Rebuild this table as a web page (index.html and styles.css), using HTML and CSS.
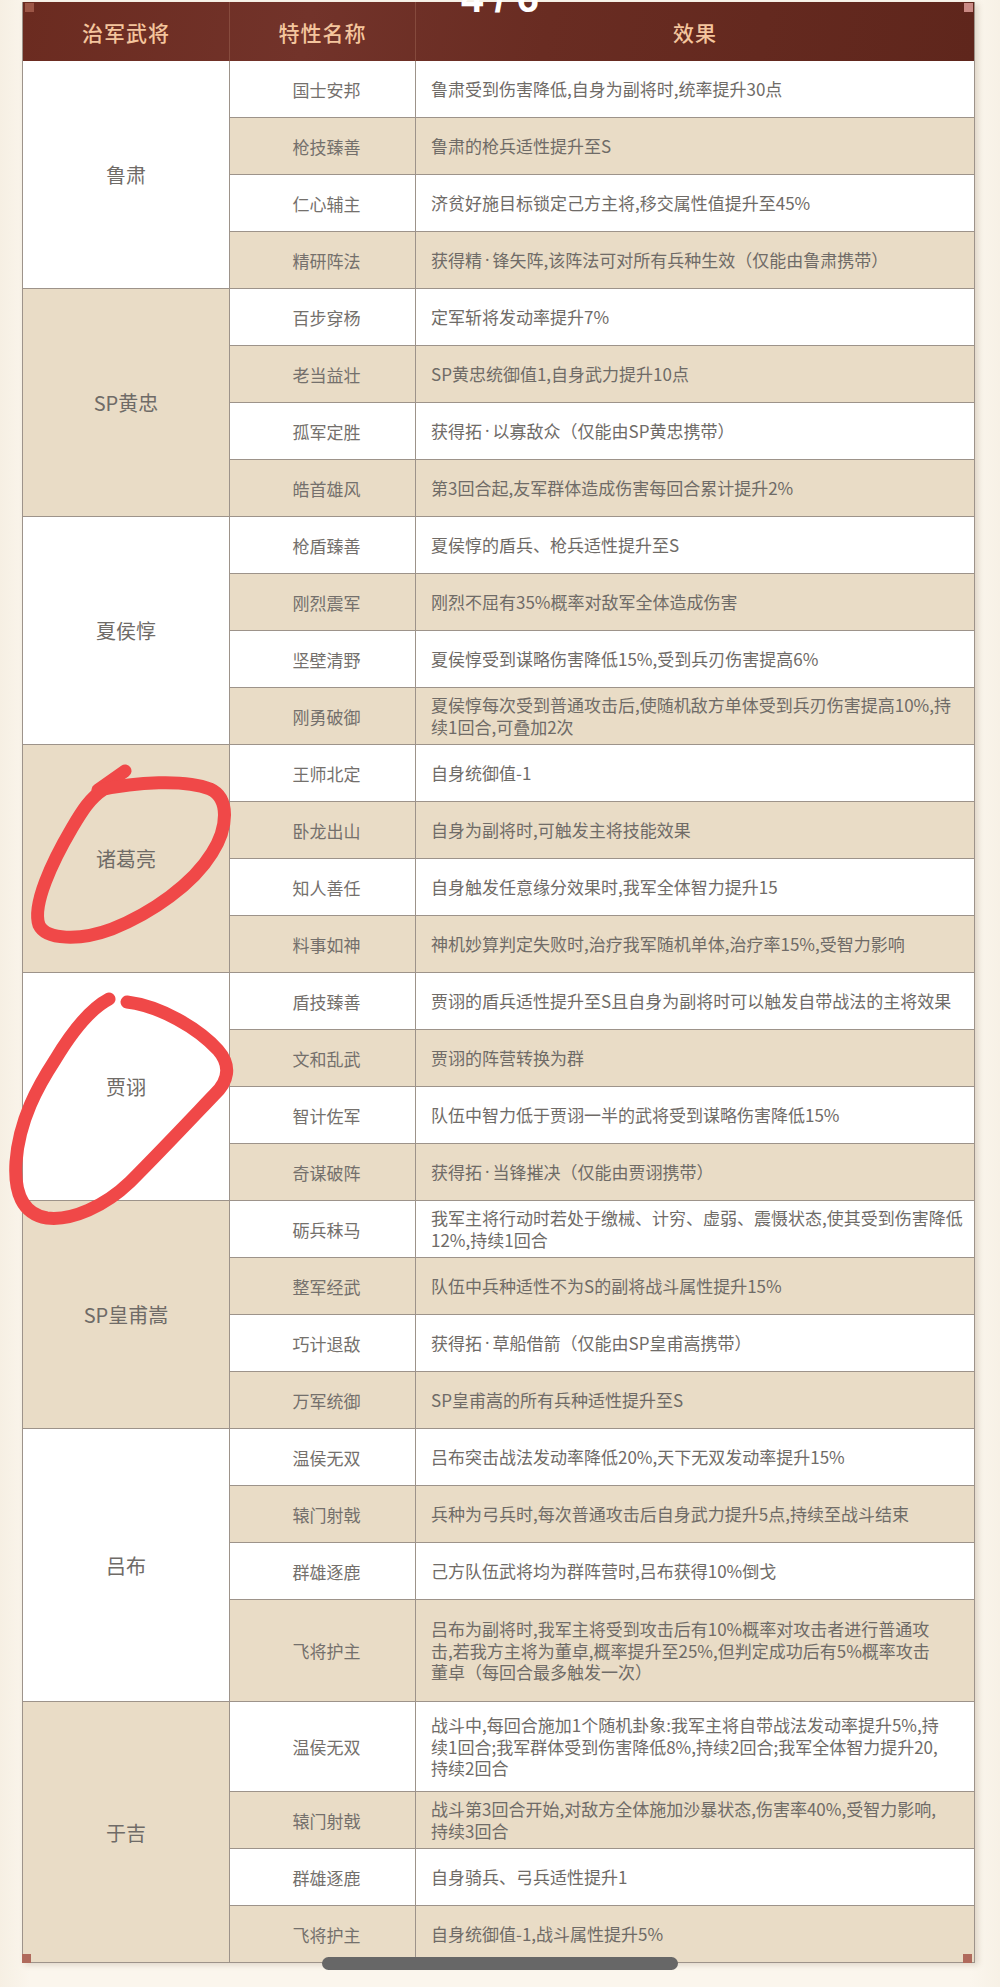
FILE: index.html
```html
<!DOCTYPE html>
<html lang="zh-CN">
<head>
<meta charset="utf-8">
<title>治军武将特性</title>
<link rel="stylesheet" href="styles.css">
</head>
<body>
<div class="page">
  <div class="table">
    <span class="corner tl"></span><span class="corner tr"></span>
    <span class="corner bl"></span><span class="corner br"></span>
    <div class="thead">
      <div class="th c1">治军武将</div>
      <div class="th c2">特性名称</div>
      <div class="th c3">效果</div>
    </div>

    <div class="group">
      <div class="gname">鲁肃</div>
      <div class="traits">
        <div class="row"><div class="tname">国士安邦</div><div class="teff">鲁肃受到伤害降低,自身为副将时,统率提升30点</div></div>
        <div class="row"><div class="tname">枪技臻善</div><div class="teff">鲁肃的枪兵适性提升至S</div></div>
        <div class="row"><div class="tname">仁心辅主</div><div class="teff">济贫好施目标锁定己方主将,移交属性值提升至45%</div></div>
        <div class="row"><div class="tname">精研阵法</div><div class="teff">获得精<span class="dot">·</span>锋矢阵,该阵法可对所有兵种生效（仅能由鲁肃携带）</div></div>
      </div>
    </div>

    <div class="group alt">
      <div class="gname">SP黄忠</div>
      <div class="traits">
        <div class="row"><div class="tname">百步穿杨</div><div class="teff">定军斩将发动率提升7%</div></div>
        <div class="row"><div class="tname">老当益壮</div><div class="teff">SP黄忠统御值1,自身武力提升10点</div></div>
        <div class="row"><div class="tname">孤军定胜</div><div class="teff">获得拓<span class="dot">·</span>以寡敌众（仅能由SP黄忠携带）</div></div>
        <div class="row"><div class="tname">皓首雄风</div><div class="teff">第3回合起,友军群体造成伤害每回合累计提升2%</div></div>
      </div>
    </div>

    <div class="group">
      <div class="gname">夏侯惇</div>
      <div class="traits">
        <div class="row"><div class="tname">枪盾臻善</div><div class="teff">夏侯惇的盾兵、枪兵适性提升至S</div></div>
        <div class="row"><div class="tname">刚烈震军</div><div class="teff">刚烈不屈有35%概率对敌军全体造成伤害</div></div>
        <div class="row"><div class="tname">坚壁清野</div><div class="teff">夏侯惇受到谋略伤害降低15%,受到兵刃伤害提高6%</div></div>
        <div class="row"><div class="tname">刚勇破御</div><div class="teff">夏侯惇每次受到普通攻击后,使随机敌方单体受到兵刃伤害提高10%,持<br>续1回合,可叠加2次</div></div>
      </div>
    </div>

    <div class="group alt">
      <div class="gname">诸葛亮</div>
      <div class="traits">
        <div class="row"><div class="tname">王师北定</div><div class="teff">自身统御值-1</div></div>
        <div class="row"><div class="tname">卧龙出山</div><div class="teff">自身为副将时,可触发主将技能效果</div></div>
        <div class="row"><div class="tname">知人善任</div><div class="teff">自身触发任意缘分效果时,我军全体智力提升15</div></div>
        <div class="row"><div class="tname">料事如神</div><div class="teff">神机妙算判定失败时,治疗我军随机单体,治疗率15%,受智力影响</div></div>
      </div>
    </div>

    <div class="group">
      <div class="gname">贾诩</div>
      <div class="traits">
        <div class="row"><div class="tname">盾技臻善</div><div class="teff">贾诩的盾兵适性提升至S且自身为副将时可以触发自带战法的主将效果</div></div>
        <div class="row"><div class="tname">文和乱武</div><div class="teff">贾诩的阵营转换为群</div></div>
        <div class="row"><div class="tname">智计佐军</div><div class="teff">队伍中智力低于贾诩一半的武将受到谋略伤害降低15%</div></div>
        <div class="row"><div class="tname">奇谋破阵</div><div class="teff">获得拓<span class="dot">·</span>当锋摧决（仅能由贾诩携带）</div></div>
      </div>
    </div>

    <div class="group alt">
      <div class="gname">SP皇甫嵩</div>
      <div class="traits">
        <div class="row"><div class="tname">砺兵秣马</div><div class="teff">我军主将行动时若处于缴械、计穷、虚弱、震慑状态,使其受到伤害降低<br>12%,持续1回合</div></div>
        <div class="row"><div class="tname">整军经武</div><div class="teff">队伍中兵种适性不为S的副将战斗属性提升15%</div></div>
        <div class="row"><div class="tname">巧计退敌</div><div class="teff">获得拓<span class="dot">·</span>草船借箭（仅能由SP皇甫嵩携带）</div></div>
        <div class="row"><div class="tname">万军统御</div><div class="teff">SP皇甫嵩的所有兵种适性提升至S</div></div>
      </div>
    </div>

    <div class="group">
      <div class="gname">吕布</div>
      <div class="traits">
        <div class="row"><div class="tname">温侯无双</div><div class="teff">吕布突击战法发动率降低20%,天下无双发动率提升15%</div></div>
        <div class="row"><div class="tname">辕门射戟</div><div class="teff">兵种为弓兵时,每次普通攻击后自身武力提升5点,持续至战斗结束</div></div>
        <div class="row"><div class="tname">群雄逐鹿</div><div class="teff">己方队伍武将均为群阵营时,吕布获得10%倒戈</div></div>
        <div class="row row-xl"><div class="tname">飞将护主</div><div class="teff">吕布为副将时,我军主将受到攻击后有10%概率对攻击者进行普通攻<br>击,若我方主将为董卓,概率提升至25%,但判定成功后有5%概率攻击<br>董卓（每回合最多触发一次）</div></div>
      </div>
    </div>

    <div class="group alt last">
      <div class="gname">于吉</div>
      <div class="traits">
        <div class="row row-l"><div class="tname">温侯无双</div><div class="teff">战斗中,每回合施加1个随机卦象:我军主将自带战法发动率提升5%,持<br>续1回合;我军群体受到伤害降低8%,持续2回合;我军全体智力提升20,<br>持续2回合</div></div>
        <div class="row"><div class="tname">辕门射戟</div><div class="teff">战斗第3回合开始,对敌方全体施加沙暴状态,伤害率40%,受智力影响,<br>持续3回合</div></div>
        <div class="row"><div class="tname">群雄逐鹿</div><div class="teff">自身骑兵、弓兵适性提升1</div></div>
        <div class="row"><div class="tname">飞将护主</div><div class="teff">自身统御值-1,战斗属性提升5%</div></div>
      </div>
    </div>
  </div>
</div>

<div class="pager">4 / 6</div>

<svg class="marks" width="1000" height="1987" viewBox="0 0 1000 1987" aria-hidden="true">
  <path d="M125,771 L98,790"/>
  <path d="M100,790 C135,782 185,779 210,789 C230,798 228,828 212,853 C193,884 152,913 112,929 C80,941 46,940 39,925 C32,905 52,862 72,828 C82,811 90,798 104,789"/>
  <path d="M127,1002 C160,1006 198,1028 218,1050 C232,1066 228,1082 214,1095 C192,1118 160,1152 130,1182 C105,1206 72,1221 47,1218 C22,1214 14,1192 16,1162 C19,1120 38,1086 55,1060 C70,1035 88,1010 109,999"/>
</svg>

<div class="scrollbar"></div>
</body>
</html>
```

FILE: styles.css
```css
html, body {
  margin: 0;
  padding: 0;
}

body {
  width: 1000px;
  height: 1987px;
  position: relative;
  overflow: hidden;
  background: linear-gradient(90deg, #f6efe3 0, #fbf6ed 30px, #fbf6ed 970px, #f7f1e6 1000px);
  font-family: "Noto Sans CJK SC", "Noto Sans", sans-serif;
}

.page {
  padding: 2px 0 0 22px;
}

.table {
  position: relative;
  width: 951px;
  background: #fff;
  border-left: 1px solid #9d938a;
  border-right: 1px solid #9d938a;
  box-shadow: 3px 2px 6px rgba(110, 80, 50, 0.2);
}

.corner {
  position: absolute;
  width: 9px;
  height: 9px;
  background: #b06a5c;
  z-index: 2;
}
.corner.tl { left: 2px; top: 1px; background: #9c5646; }
.corner.tr { right: 1px; top: 1px; background: #c98a84; }
.corner.bl { left: -1px; bottom: 0; }
.corner.br { right: 2px; bottom: 0; }

.thead {
  display: flex;
  height: 59px;
  background: linear-gradient(100deg, #6b2b20 0%, #72332a 30%, #692c22 55%, #5f261c 100%);
}

.th {
  display: flex;
  align-items: center;
  justify-content: center;
  color: #f4c59d;
  font-size: 21px;
  font-weight: 500;
  letter-spacing: 1px;
}

.th.c1 {
  width: 206px;
  border-right: 1px solid rgba(255, 210, 180, 0.16);
}

.th.c2 {
  width: 185px;
  border-right: 1px solid rgba(255, 210, 180, 0.16);
}

.th.c3 {
  flex: 1;
}

.group {
  display: flex;
  border-bottom: 1px solid #9d938a;
}

.gname {
  width: 206px;
  flex: none;
  border-right: 1px solid #9d938a;
  display: flex;
  align-items: center;
  justify-content: center;
  font-size: 20px;
  color: #6f6b67;
  background: #fff;
}

.group.alt .gname {
  background: #e9dcc6;
}

.traits {
  flex: 1;
  display: flex;
  flex-direction: column;
}

.row {
  display: flex;
  height: 56px;
  background: #fff;
}

.row + .row {
  border-top: 1px solid #9d938a;
}

.row:nth-child(even) {
  background: #e9dcc6;
}

.row.row-xl {
  height: 101px;
}

.row.row-l {
  height: 89px;
}

.tname {
  width: 177px;
  flex: none;
  padding-left: 8px;
  border-right: 1px solid #9d938a;
  display: flex;
  align-items: center;
  justify-content: center;
  font-size: 17px;
  color: #74706c;
}

.teff {
  flex: 1;
  display: flex;
  align-items: center;
  padding: 0 10px 0 15px;
  font-size: 17px;
  line-height: 21.6px;
  color: #6f6b67;
  white-space: nowrap;
}

.teff .dot {
  font-family: "Noto Sans", "DejaVu Sans", sans-serif;
  padding: 0 3px;
}

.pager {
  position: absolute;
  top: -22px;
  left: 0;
  width: 1000px;
  text-align: center;
  font-family: "Liberation Sans", Arial, sans-serif;
  font-weight: 700;
  font-size: 40px;
  line-height: 40px;
  color: #fff;
  white-space: pre;
}

.marks {
  position: absolute;
  left: 0;
  top: 0;
  pointer-events: none;
  fill: none;
  stroke: #f04848;
  stroke-width: 13;
  stroke-linecap: round;
  stroke-linejoin: round;
}

.scrollbar {
  position: absolute;
  left: 322px;
  top: 1957px;
  width: 356px;
  height: 13px;
  border-radius: 7px;
  background: #676767;
}
```
